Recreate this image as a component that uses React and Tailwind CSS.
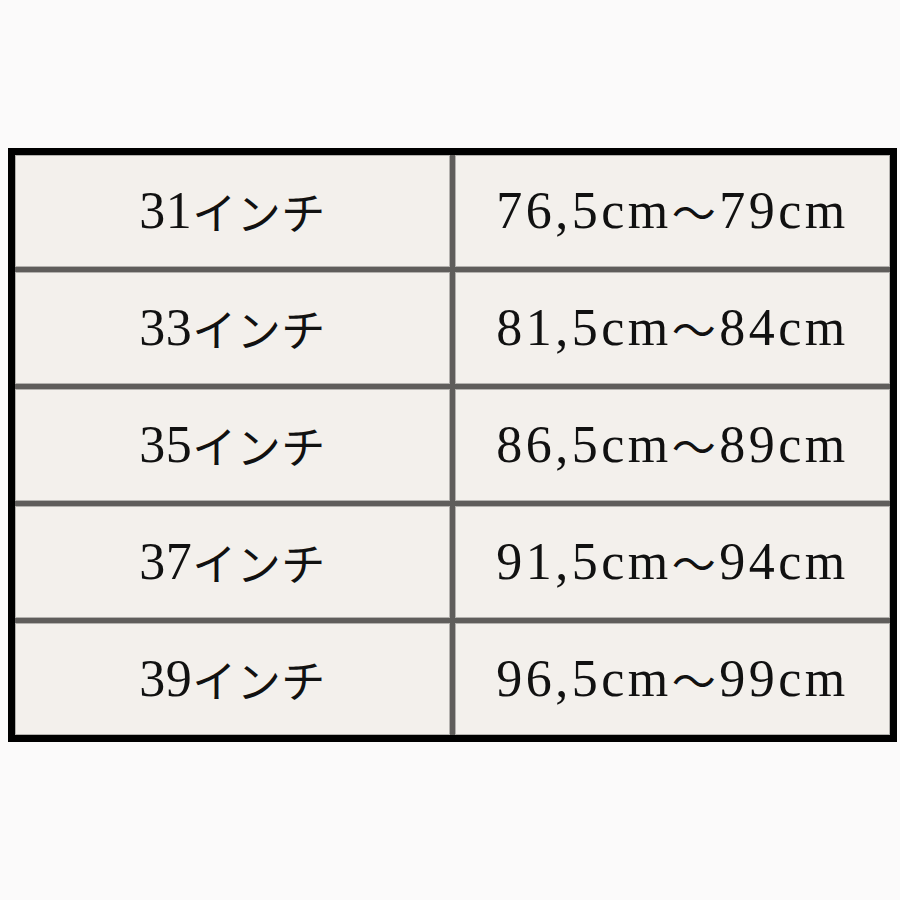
import React from 'react';

const rows = [
  ['31', '76,5cm', '79cm'],
  ['33', '81,5cm', '84cm'],
  ['35', '86,5cm', '89cm'],
  ['37', '91,5cm', '94cm'],
  ['39', '96,5cm', '99cm'],
];

const Latin = ({ children }) => (
  <span className="font-['Liberation_Serif','Times_New_Roman',serif]">{children}</span>
);

const Kana = ({ children }) => (
  <span className="font-['Noto_Sans_CJK_JP',sans-serif] font-normal text-[44px]">{children}</span>
);

const App = () => {
  return (
    <div className="w-[900px] h-[900px] bg-[#fbfafa] pt-[148px] pl-[8px]">
      <div className="w-[889px] border-[7px] border-black bg-[#5f5d5b] grid grid-cols-2 gap-[5px]">
        {rows.map(([inch, from, to]) => (
          <React.Fragment key={inch}>
            <div className="h-[112px] bg-[#f3f0ec] border border-[#b4b2af] flex items-center justify-center text-[52px] text-[#111111] tracking-[0.5px]">
              <Latin>{inch}</Latin>
              <Kana>インチ</Kana>
            </div>
            <div className="h-[112px] bg-[#f3f0ec] border border-[#b4b2af] flex items-center justify-center text-[52px] text-[#111111] tracking-[3.5px]">
              <Latin>{from}</Latin>
              <Kana>〜</Kana>
              <Latin>{to}</Latin>
            </div>
          </React.Fragment>
        ))}
      </div>
    </div>
  );
};

export default App;
